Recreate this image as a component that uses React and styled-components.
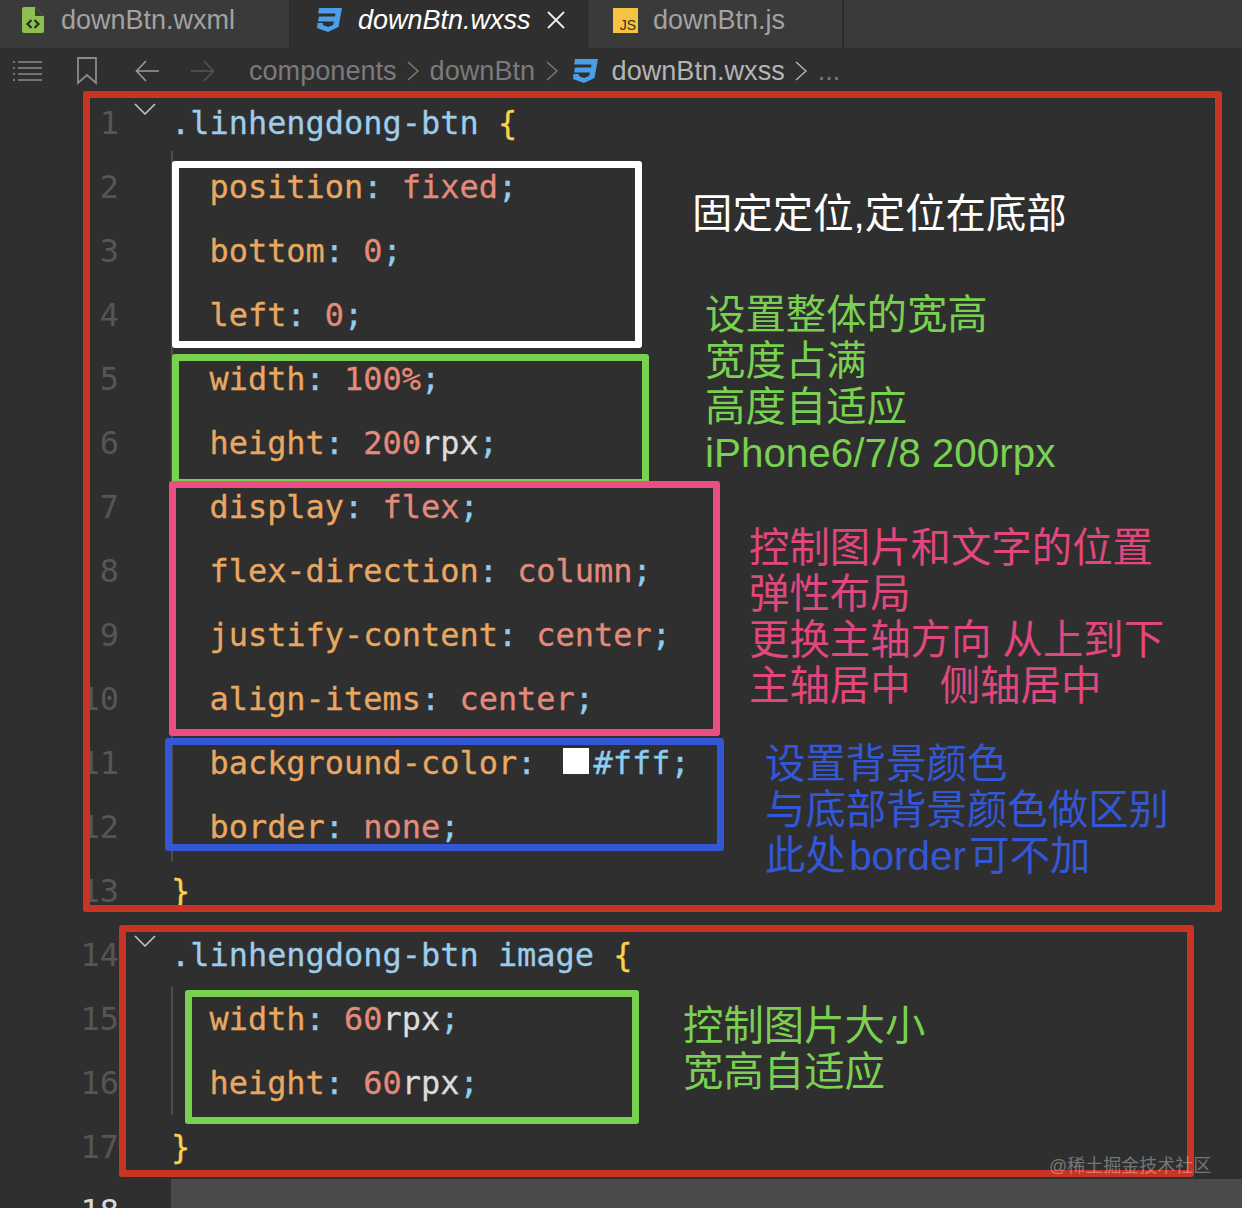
import React from 'react';
import styled, { createGlobalStyle } from 'styled-components';

const colors = {
    prop: '#e8a862',
    value: '#e38b7b',
    selector: '#9dcdea',
    brace: '#f7d24a',
    punct: '#8ccdf0',
    plain: '#dcdcdc',
};

const lines = [
    [['selector', '.linhengdong-btn '], ['brace', '{']],
    [['prop', '  position'], ['punct', ': '], ['value', 'fixed'], ['punct', ';']],
    [['prop', '  bottom'], ['punct', ': '], ['value', '0'], ['punct', ';']],
    [['prop', '  left'], ['punct', ': '], ['value', '0'], ['punct', ';']],
    [['prop', '  width'], ['punct', ': '], ['value', '100%'], ['punct', ';']],
    [['prop', '  height'], ['punct', ': '], ['value', '200'], ['plain', 'rpx'], ['punct', ';']],
    [['prop', '  display'], ['punct', ': '], ['value', 'flex'], ['punct', ';']],
    [['prop', '  flex-direction'], ['punct', ': '], ['value', 'column'], ['punct', ';']],
    [['prop', '  justify-content'], ['punct', ': '], ['value', 'center'], ['punct', ';']],
    [['prop', '  align-items'], ['punct', ': '], ['value', 'center'], ['punct', ';']],
    [['prop', '  background-color'], ['punct', ': '], ['swatch', ''], ['punct', '#fff;']],
    [['prop', '  border'], ['punct', ': '], ['value', 'none'], ['punct', ';']],
    [['brace', '}']],
    [['selector', '.linhengdong-btn image '], ['brace', '{']],
    [['prop', '  width'], ['punct', ': '], ['value', '60'], ['plain', 'rpx'], ['punct', ';']],
    [['prop', '  height'], ['punct', ': '], ['value', '60'], ['plain', 'rpx'], ['punct', ';']],
    [['brace', '}']],
    [],
];

const boxes = [
    { x: 83, y: 91, w: 1139, h: 821, c: '#c93424' },
    { x: 119, y: 925, w: 1075, h: 252, c: '#c93424' },
    { x: 172, y: 161, w: 470, h: 187, c: '#ffffff' },
    { x: 172, y: 354, w: 477, h: 132, c: '#79d051' },
    { x: 169, y: 481, w: 551, h: 255, c: '#ea4f83' },
    { x: 165, y: 738, w: 559, h: 113, c: '#3457d5' },
    { x: 185, y: 990, w: 454, h: 134, c: '#79d051' },
];

const notes = [
    { x: 692, y: 191, c: '#ffffff', text: ['固定定位,定位在底部'] },
    { x: 705, y: 292, c: '#79d051', text: ['设置整体的宽高', '宽度占满', '高度自适应', 'iPhone6/7/8 200rpx'] },
    { x: 749, y: 525, c: '#e0487d', text: ['控制图片和文字的位置', '弹性布局', '更换主轴方向 从上到下', '主轴居中  \u2006侧轴居中'] },
    { x: 765, y: 741, c: '#3457d5', text: ['设置背景颜色', '与底部背景颜色做区别', '此处\u200Aborder\u200A可不加'] },
    { x: 683, y: 1003, c: '#79d051', text: ['控制图片大小', '宽高自适应'] },
];

const CssIcon = () => (
    <svg width="26" height="24" viewBox="0 0 26 24">
        <path d="M3 0H26L22.500 19L12 24L1 20L1.500 15H7L6.800 17L12 19L17 17L18 13.500H2L3 8.500H19L19.500 5.500H2.200z" fill="#4a9fe8" />
    </svg>
);

const XmlIcon = () => (
    <svg width="22" height="26" viewBox="0 0 22 26">
        <path d="M2 0h11l9 9v15a2 2 0 0 1-2 2H2a2 2 0 0 1-2-2V2a2 2 0 0 1 2-2z" fill="#8cc152" />
        <path d="M13 0l9 9h-9z" fill="#3a3a3a" />
        <path d="M9.500 13l-4 4 4 4M12.500 13l4 4-4 4" fill="none" stroke="#25301c" strokeWidth="2.200" />
    </svg>
);

const JsIcon = () => (
    <svg width="25" height="25" viewBox="0 0 25 25">
        <rect width="25" height="25" fill="#f5c242" />
        <text x="23" y="22" textAnchor="end" fontFamily="Liberation Sans, sans-serif" fontSize="14" fill="#33302a">JS</text>
    </svg>
);

const Chevron = ({ color }) => (
    <svg width="12" height="20" viewBox="0 0 12 20">
        <path d="M1 1l10 9-10 9" fill="none" stroke={color} strokeWidth="1.500" />
    </svg>
);

const FoldIcon = () => (
    <svg width="22" height="12" viewBox="0 0 22 12">
        <path d="M1 1l10 10L21 1" fill="none" stroke="#c8c8c8" strokeWidth="1.500" />
    </svg>
);

export default function App() {
    return (
        <Page>
            <GlobalStyle />
            <TabBar>
                <Tab $width={291} $left={22} $gap={17}><XmlIcon /><TabLabel>downBtn.wxml</TabLabel></Tab>
                <Tab $width={297} $left={25} $gap={16} $active>
                    <CssIcon />
                    <TabLabel $active>downBtn.wxss</TabLabel>
                    <svg width="18" height="18" viewBox="0 0 18 18">
                        <path d="M1 1l16 16M17 1L1 17" stroke="#eee" strokeWidth="1.800" />
                    </svg>
                </Tab>
                <Tab $width={256} $left={25} $gap={15}><JsIcon /><TabLabel>downBtn.js</TabLabel></Tab>
            </TabBar>
            <Breadcrumb>
                <ToolIcons>
                    <svg width="30" height="22" viewBox="0 0 30 22">
                        <path d="M6 2h24M6 8h24M6 14h24M6 20h24M1 2h2M1 8h2M1 14h2M1 20h2" stroke="#8a8a8a" strokeWidth="1.500" />
                    </svg>
                    <svg width="20" height="28" viewBox="0 0 20 28">
                        <path d="M1 1h18v25l-9-8-9 8z" fill="none" stroke="#8a8a8a" strokeWidth="1.800" />
                    </svg>
                    <svg width="24" height="22" viewBox="0 0 24 22">
                        <path d="M24 11H2M11 1L1.500 11l9.500 10" fill="none" stroke="#9a9a9a" strokeWidth="1.600" />
                    </svg>
                    <svg width="24" height="22" viewBox="0 0 24 22">
                        <path d="M0 11h22M13 1l9.500 10L13 21" fill="none" stroke="#555" strokeWidth="1.600" />
                    </svg>
                </ToolIcons>
                <Crumb>components</Crumb>
                <Chevron color="#7b7b7b" />
                <Crumb>downBtn</Crumb>
                <Chevron color="#7b7b7b" />
                <CrumbIcon><CssIcon /></CrumbIcon>
                <Crumb $current>downBtn.wxss</Crumb>
                <Chevron color="#b4b4b4" />
                <Crumb>...</Crumb>
            </Breadcrumb>
            <Editor>
                {lines.map((tokens, i) => (
                    <Row key={i}>
                        <LineNumber $current={i === 17}>{i + 1}</LineNumber>
                        <Code $current={i === 17}>
                            {tokens.map(([kind, text], j) =>
                                kind === 'swatch' ? <Swatch key={j} /> : <Token key={j} $color={colors[kind]}>{text}</Token>
                            )}
                        </Code>
                    </Row>
                ))}
                <Guide $top={60} $height={710} />
                <Guide $top={896} $height={128} />
                <Fold $top={12}><FoldIcon /></Fold>
                <Fold $top={844}><FoldIcon /></Fold>
                {boxes.map((b, i) => (
                    <Box key={i} $x={b.x} $y={b.y - 91} $w={b.w} $h={b.h} $color={b.c} />
                ))}
                {notes.map((n, i) => (
                    <Note key={i} $x={n.x} $y={n.y - 91} $color={n.c}>
                        {n.text.map(t => <div key={t}>{t}</div>)}
                    </Note>
                ))}
                <Watermark>@稀土掘金技术社区</Watermark>
            </Editor>
        </Page>
    );
}

const GlobalStyle = createGlobalStyle`
    html, body {
        margin: 0;
        background: #2f2f2f;
    }
`;

const Page = styled.div`
    width: 1242px;
    height: 1208px;
    overflow: hidden;
    background: #2f2f2f;
    font-family: "Liberation Sans", "Noto Sans CJK SC", sans-serif;
`;

const TabBar = styled.div`
    display: flex;
    height: 48px;
    background: #3a3a3a;
`;

const Tab = styled.div`
    display: flex;
    align-items: center;
    gap: ${p => p.$gap}px;
    box-sizing: border-box;
    width: ${p => p.$width}px;
    padding: 0 0 8px ${p => p.$left}px;
    background: ${p => (p.$active ? '#2f2f2f' : '#3a3a3a')};
    border-right: 2px solid #2b2b2b;
`;

const TabLabel = styled.span`
    font-size: 27px;
    color: ${p => (p.$active ? '#ffffff' : '#a2a2a2')};
    font-style: ${p => (p.$active ? 'italic' : 'normal')};
`;

const Breadcrumb = styled.div`
    display: flex;
    align-items: center;
    gap: 10.500px;
    height: 43px;
    padding: 2px 0 0 12px;
    box-sizing: border-box;
    font-size: 27.100px;
`;

const ToolIcons = styled.div`
    display: flex;
    align-items: center;
    width: 226.500px;

    svg:nth-child(1) { margin-right: 35px; }
    svg:nth-child(2) { margin-right: 38px; }
    svg:nth-child(3) { margin-right: 32px; }
`;

const Crumb = styled.span`
    color: ${p => (p.$current ? '#b4b4b4' : '#7b7b7b')};
`;

const CrumbIcon = styled.span`
    display: flex;
    margin: 0 3px 0 4px;
`;

const Editor = styled.div`
    position: relative;
    font-family: "DejaVu Sans Mono", "Liberation Mono", monospace;
    font-size: 31.950px;
`;

const Row = styled.div`
    display: flex;
    height: 64px;
    line-height: 64px;
`;

const LineNumber = styled.div`
    width: 119px;
    text-align: right;
    color: ${p => (p.$current ? '#d8d8d8' : '#565656')};
`;

const Code = styled.div`
    flex: 1;
    margin-left: 52px;
    white-space: pre;
    -webkit-text-stroke: 0.300px currentColor;
    background: ${p => (p.$current ? '#4a4a4a' : 'transparent')};
`;

const Token = styled.span`
    color: ${p => p.$color};
`;

const Swatch = styled.span`
    display: inline-block;
    width: 26px;
    height: 26px;
    margin: 0 5px 0 7px;
    background: #ffffff;
`;

const Guide = styled.div`
    position: absolute;
    left: 171px;
    top: ${p => p.$top}px;
    width: 2px;
    height: ${p => p.$height}px;
    background: #4c4c4c;
`;

const Fold = styled.div`
    position: absolute;
    display: flex;
    left: 134px;
    top: ${p => p.$top}px;
`;

const Box = styled.div`
    position: absolute;
    box-sizing: border-box;
    left: ${p => p.$x}px;
    top: ${p => p.$y}px;
    width: ${p => p.$w}px;
    height: ${p => p.$h}px;
    border: 7px solid ${p => p.$color};
    border-radius: 3px;
`;

const Note = styled.div`
    position: absolute;
    left: ${p => p.$x}px;
    top: ${p => p.$y}px;
    font-family: "Liberation Sans", "Noto Sans CJK SC", sans-serif;
    font-size: 40.400px;
    line-height: 46px;
    white-space: pre;
    color: ${p => p.$color};
`;

const Watermark = styled.div`
    position: absolute;
    left: 1049px;
    top: 1064px;
    font-family: "Liberation Sans", "Noto Sans CJK SC", sans-serif;
    font-size: 18px;
    line-height: 22px;
    color: rgba(255, 255, 255, 0.35);
`;
